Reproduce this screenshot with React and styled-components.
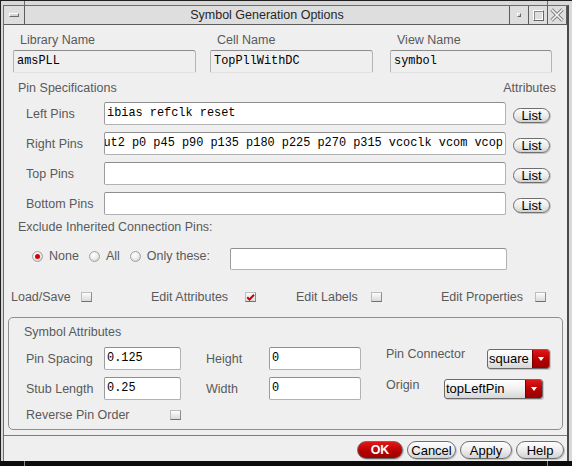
import React from "react";
import styled, { createGlobalStyle } from "styled-components";

const sans = `"Liberation Sans", Arial, sans-serif`;
const mono = `"Liberation Mono", "Courier New", monospace`;

const GlobalStyle = createGlobalStyle`
  html, body {
    margin: 0;
    padding: 0;
  }
  body {
    background: #000;
    font-family: ${sans};
  }
`;

const Window = styled.div`
  position: relative;
  box-sizing: border-box;
  width: 572px;
  height: 461px;
  padding: 4px 3px 0 2px;
  background: #d9d9d9;
  border-left: 1px solid #202020;
  border-top: 1px solid #202020;
  display: flex;
`;

const Handle = styled.span`
  position: absolute;
  top: 0;
  left: ${(p) => p.$x}px;
  width: 1px;
  height: ${(p) => p.$h || 5}px;
  background: ${(p) => p.$color || "#6a6a6a"};
`;

const BottomEdge = styled.div`
  position: relative;
  width: 572px;
  height: 5px;
  background: #0c0c0c;
`;

const Inner = styled.div`
  flex: 1;
  display: flex;
  flex-direction: column;
  background: #efefef;
  border-left: 1px solid #6c6c6c;
  border-top: 1px solid #6c6c6c;
  border-right: 2px solid #4a4a4a;
`;

const TitleBar = styled.div`
  display: flex;
  height: 18px;
  background: #dedede;
  border-bottom: 1px solid #5c5c5c;
`;

const TitleButton = styled.div`
  width: ${(p) => p.$w || 18}px;
  display: flex;
  align-items: center;
  justify-content: center;
  border-left: ${(p) => (p.$menu ? "none" : "1px solid #5c5c5c")};
  border-right: ${(p) => (p.$menu || p.$last ? "1px solid #5c5c5c" : "none")};
`;

const MenuBar = styled.span`
  box-sizing: border-box;
  width: 10px;
  height: 4px;
  background: #d4d4d4;
  border-top: 1px solid #fff;
  border-left: 1px solid #fff;
  border-bottom: 1px solid #6a6a6a;
  border-right: 1px solid #6a6a6a;
`;

const MinBox = styled.span`
  box-sizing: border-box;
  width: 4px;
  height: 4px;
  background: #cfcfcf;
  border-top: 1px solid #fff;
  border-left: 1px solid #fff;
  border-bottom: 1px solid #666;
  border-right: 1px solid #666;
`;

const MaxBox = styled.span`
  box-sizing: border-box;
  width: 11px;
  height: 11px;
  border-top: 1px solid #fff;
  border-left: 1px solid #fff;
  border-bottom: 1px solid #666;
  border-right: 1px solid #666;
  box-shadow: inset 1px 1px 0 #8a8a8a, inset -1px -1px 0 #fff;
`;

const Title = styled.div`
  flex: 1;
  text-align: center;
  font-size: 12.5px;
  line-height: 18px;
  color: #262626;
`;

const Body = styled.div`
  flex: 1;
  display: flex;
  flex-direction: column;
  padding-top: 8px;
`;

const NameRow = styled.div`
  display: flex;
`;

const NameCol = styled.div`
  display: flex;
  flex-direction: column;
  width: ${(p) => p.$w}px;
  margin-left: ${(p) => p.$offset}px;
`;

const Label = styled.span`
  font-size: 12.5px;
  line-height: 14px;
  height: 14px;
  color: #5a5a5a;
  white-space: nowrap;
`;

const NameLabel = styled(Label)`
  padding-left: 7px;
  margin-bottom: 3px;
`;

const ReadOnlyField = styled.div`
  box-sizing: border-box;
  height: 23px;
  padding-left: 3px;
  border: 1px solid #b4b4b4;
  border-top-color: #8c8c8c;
  border-bottom-color: #e2e2e2;
  border-radius: 2px 3px 2px 2px;
  font-family: ${mono};
  font-size: 11.9px;
  line-height: 21px;
  color: #000;
`;

const SectionHeader = styled.div`
  display: flex;
  justify-content: space-between;
  margin: 8px 11px 7px 14px;
`;

const PinList = styled.div`
  display: flex;
  flex-direction: column;
  gap: 7px;
  margin-left: 22px;
`;

const Row = styled.div`
  display: flex;
  align-items: center;
  height: 23px;
`;

const RowLabel = styled(Label)`
  width: ${(p) => p.$w}px;
  margin-left: ${(p) => p.$gap || 0}px;
  align-self: ${(p) => (p.$top !== undefined ? "flex-start" : "auto")};
  margin-top: ${(p) => p.$top || 0}px;
`;

const TextField = styled.div`
  box-sizing: border-box;
  width: ${(p) => p.$w}px;
  height: ${(p) => p.$h || 23}px;
  margin-left: ${(p) => p.$gap || 0}px;
  padding: 0 2px;
  display: flex;
  justify-content: ${(p) => (p.$end ? "flex-end" : "flex-start")};
  overflow: hidden;
  white-space: nowrap;
  background: #fff;
  border: 1px solid #b2b2b2;
  border-top-color: #8e8e8e;
  border-left-color: #9c9c9c;
  border-radius: 2px 3px 2px 2px;
  font-family: ${mono};
  font-size: 11.9px;
  line-height: 21px;
  color: #000;
`;

const PillButton = styled.div`
  box-sizing: border-box;
  width: ${(p) => p.$w}px;
  height: ${(p) => p.$h}px;
  margin-left: ${(p) => p.$gap || 0}px;
  margin-top: ${(p) => p.$top || 0}px;
  display: flex;
  align-items: center;
  justify-content: center;
  border: 1px solid #6e6e6e;
  border-radius: ${(p) => p.$h / 2}px;
  background: ${(p) =>
    p.$primary
      ? "linear-gradient(#e41515, #b40000 60%, #a00000)"
      : "linear-gradient(#fdfdfd, #ececec 55%, #d2d2d2)"};
  box-shadow: 1px 1px 0 #c4c4c4;
  font-size: ${(p) => (p.$primary ? "12.5px" : "13px")};
  font-weight: ${(p) => (p.$primary ? 700 : 400)};
  color: ${(p) => (p.$primary ? "#fff" : "#000")};
  line-height: 1;
`;

const Indented = styled(Label)`
  margin: 5px 0 0 14px;
`;

const RadioRow = styled.div`
  display: flex;
  align-items: flex-start;
  margin: 14px 60px 0 28px;
`;

const RadioItem = styled.label`
  display: flex;
  align-items: center;
  gap: 6px;
  height: 14px;
  margin: 1px 10px 0 0;
`;

const Radio = styled.span`
  box-sizing: border-box;
  width: 11px;
  height: 11px;
  border-radius: 50%;
  border: 1px solid #a2a2a2;
  background: radial-gradient(circle at 40% 35%, #fff 0%, #ececec 50%, #bdbdbd 100%);
  display: flex;
  align-items: center;
  justify-content: center;
  &::after {
    content: "";
    display: ${(p) => (p.$on ? "block" : "none")};
    width: 5px;
    height: 5px;
    border-radius: 50%;
    background: #d40000;
  }
`;

const CheckRow = styled.div`
  display: flex;
  align-items: center;
  height: 14px;
  margin-top: 20px;
`;

const CheckItem = styled.div`
  display: flex;
  align-items: center;
  margin-left: ${(p) => p.$gap}px;
`;

const Box = styled.span`
  box-sizing: border-box;
  width: 11px;
  height: 10px;
  display: flex;
  align-items: center;
  justify-content: center;
  border: 1px solid #bdbdbd;
  border-bottom-color: #707070;
  border-right-color: #8c8c8c;
  background: linear-gradient(#fdfdfd, #dadada);
  overflow: visible;
`;

const Group = styled.fieldset`
  margin: 13px 4px 0 4px;
  padding: 7px 0 7px 15px;
  min-width: 0;
  border: 1px solid #8e8e8e;
  border-radius: 5px;
  display: flex;
  flex-direction: column;
`;

const GroupRow = styled(Row)`
  margin: ${(p) => p.$top}px 0 0 2px;
`;

const ReverseRow = styled(CheckRow)`
  margin: 8px 0 0 2px;
`;

const Select = styled.div`
  box-sizing: border-box;
  display: flex;
  width: ${(p) => p.$w}px;
  height: 20px;
  margin-left: ${(p) => p.$gap || 0}px;
  border: 1px solid #6a6a6a;
  border-radius: 3px;
  overflow: hidden;
  background: linear-gradient(#ffffff, #f0f0f0 50%, #d6d6d6);
  box-shadow: 1px 1px 0 #c8c8c8;
`;

const SelectText = styled.span`
  flex: 1;
  padding-left: 1px;
  font-size: 13px;
  line-height: 18px;
  color: #000;
`;

const SelectArrow = styled.span`
  width: 16px;
  display: flex;
  align-items: center;
  justify-content: center;
  border-left: 1px solid #7a0000;
  background: linear-gradient(#e01818, #b00000 60%, #9a0000);
  &::after {
    content: "";
    border-left: 3px solid transparent;
    border-right: 3px solid transparent;
    border-top: 4px solid #fff;
  }
`;

const ButtonBar = styled.div`
  box-sizing: border-box;
  height: 26px;
  display: flex;
  justify-content: flex-end;
  gap: 4px;
  padding: 5px 3px 0 0;
  border-top: 1px solid #7c7c7c;
`;

const CheckMark = () => (
  <svg width="11" height="9" viewBox="0 0 11 9">
    <path d="M1.5 4.2 L4.3 7 L9.8 1.2" fill="none" stroke="#d20000" strokeWidth="2.4" />
  </svg>
);

const CloseIcon = () => (
  <svg width="14" height="14" viewBox="0 0 14 14">
    <path d="M1.5 1.5 L12.5 12.5 M12.5 1.5 L1.5 12.5" stroke="#7c7c7c" strokeWidth="3.4" />
    <path d="M1.5 1.5 L12.5 12.5 M12.5 1.5 L1.5 12.5" stroke="#f4f4f4" strokeWidth="1.6" />
  </svg>
);

const pins = [
  { label: "Left Pins", value: "ibias refclk reset" },
  {
    label: "Right Pins",
    value: "ut2 p0 p45 p90 p135 p180 p225 p270 p315 vcoclk vcom vcop",
    end: true,
  },
  { label: "Top Pins", value: "" },
  { label: "Bottom Pins", value: "" },
];

const checks = [
  { label: "Load/Save", w: 70, gap: 7 },
  { label: "Edit Attributes", w: 94, gap: 59, on: true },
  { label: "Edit Labels", w: 75, gap: 40 },
  { label: "Edit Properties", w: 94, gap: 59 },
];

export default function App() {
  return (
    <>
      <GlobalStyle />
      <Window>
        <Handle $x={23} />
        <Handle $x={546} />
        <Inner>
          <TitleBar>
            <TitleButton $menu $w={20}>
              <MenuBar />
            </TitleButton>
            <Title>Symbol Generation Options</Title>
            <TitleButton>
              <MinBox />
            </TitleButton>
            <TitleButton>
              <MaxBox />
            </TitleButton>
            <TitleButton $last>
              <CloseIcon />
            </TitleButton>
          </TitleBar>

          <Body>
            <NameRow>
              <NameCol $w={183} $offset={9}>
                <NameLabel>Library Name</NameLabel>
                <ReadOnlyField>amsPLL</ReadOnlyField>
              </NameCol>
              <NameCol $w={163} $offset={14}>
                <NameLabel>Cell Name</NameLabel>
                <ReadOnlyField>TopPllWithDC</ReadOnlyField>
              </NameCol>
              <NameCol $w={162} $offset={17}>
                <NameLabel>View Name</NameLabel>
                <ReadOnlyField>symbol</ReadOnlyField>
              </NameCol>
            </NameRow>

            <SectionHeader>
              <Label>Pin Specifications</Label>
              <Label>Attributes</Label>
            </SectionHeader>

            <PinList>
              {pins.map((p) => (
                <Row key={p.label}>
                  <RowLabel $w={78}>{p.label}</RowLabel>
                  <TextField $w={402} $end={p.end}>
                    {p.value}
                  </TextField>
                  <PillButton $w={37} $h={15} $gap={7} $top={3}>
                    List
                  </PillButton>
                </Row>
              ))}
            </PinList>

            <Indented>Exclude Inherited Connection Pins:</Indented>

            <RadioRow>
              <RadioItem>
                <Radio $on />
                <Label>None</Label>
              </RadioItem>
              <RadioItem>
                <Radio />
                <Label>All</Label>
              </RadioItem>
              <RadioItem>
                <Radio />
                <Label>Only these:</Label>
              </RadioItem>
              <TextField $w={277} $h={22} style={{ marginLeft: "auto" }} />
            </RadioRow>

            <CheckRow>
              {checks.map((c) => (
                <CheckItem key={c.label} $gap={c.gap}>
                  <RowLabel $w={c.w}>{c.label}</RowLabel>
                  <Box>{c.on && <CheckMark />}</Box>
                </CheckItem>
              ))}
            </CheckRow>

            <Group>
              <Label>Symbol Attributes</Label>
              <GroupRow $top={8}>
                <RowLabel $w={78}>Pin Spacing</RowLabel>
                <TextField $w={77}>0.125</TextField>
                <RowLabel $w={63} $gap={25}>
                  Height
                </RowLabel>
                <TextField $w={92}>0</TextField>
                <RowLabel $w={101} $gap={25} $top={0}>
                  Pin Connector
                </RowLabel>
                <Select $w={63}>
                  <SelectText>square</SelectText>
                  <SelectArrow />
                </Select>
              </GroupRow>
              <GroupRow $top={7}>
                <RowLabel $w={78}>Stub Length</RowLabel>
                <TextField $w={77}>0.25</TextField>
                <RowLabel $w={63} $gap={25}>
                  Width
                </RowLabel>
                <TextField $w={92}>0</TextField>
                <RowLabel $w={58} $gap={25} $top={1}>
                  Origin
                </RowLabel>
                <Select $w={99}>
                  <SelectText>topLeftPin</SelectText>
                  <SelectArrow />
                </Select>
              </GroupRow>
              <ReverseRow>
                <RowLabel $w={144}>Reverse Pin Order</RowLabel>
                <Box />
              </ReverseRow>
            </Group>
          </Body>

          <ButtonBar>
            <PillButton $w={46} $h={18} $primary>
              OK
            </PillButton>
            <PillButton $w={49} $h={18}>
              Cancel
            </PillButton>
            <PillButton $w={52} $h={18}>
              Apply
            </PillButton>
            <PillButton $w={48} $h={18}>
              Help
            </PillButton>
          </ButtonBar>
        </Inner>
      </Window>
      <BottomEdge>
        <Handle $x={24} $color="#8a8a8a" />
        <Handle $x={547} $color="#8a8a8a" />
      </BottomEdge>
    </>
  );
}
